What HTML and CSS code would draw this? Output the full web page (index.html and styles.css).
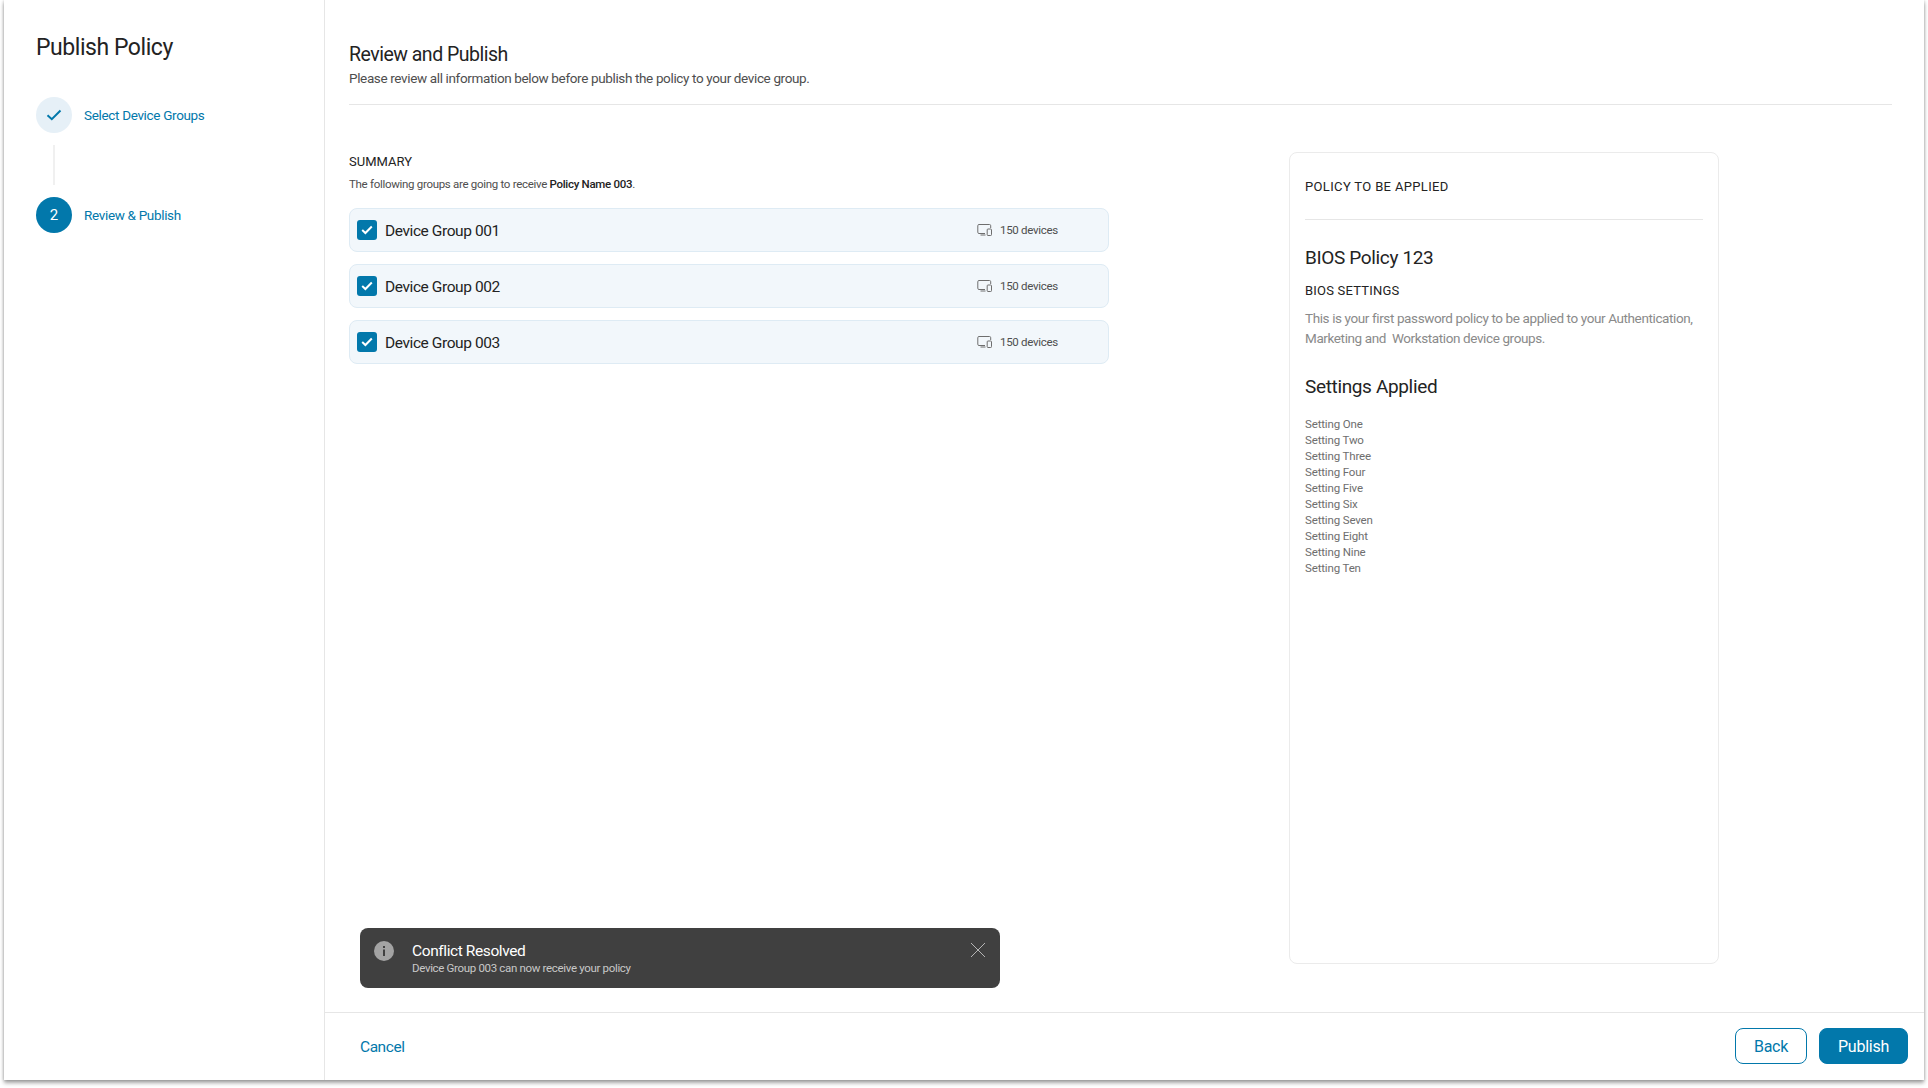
FILE: index.html
```html
<!DOCTYPE html>
<html lang="en">
<head>
<meta charset="utf-8">
<title>Publish Policy</title>
<link rel="stylesheet" href="styles.css">
</head>
<body>
<div class="frame">
  <aside class="sidebar">
    <h1 class="side-title">Publish Policy</h1>
    <ol class="steps">
      <li class="step">
        <span class="step-dot step-dot-done">
          <svg width="16" height="12" viewBox="0 0 16 12" fill="none"><path d="M1.5 6.2 5.8 10.2 14.5 1.5" stroke="#0278ab" stroke-width="2"/></svg>
        </span>
        <span class="step-label">Select Device Groups</span>
      </li>
      <li class="step-line"></li>
      <li class="step">
        <span class="step-dot step-dot-active">2</span>
        <span class="step-label">Review &amp; Publish</span>
      </li>
    </ol>
  </aside>
  <main class="main">
    <div class="content">
      <header class="head">
        <h2 class="head-title">Review and Publish</h2>
        <p class="head-sub">Please review all information below before publish the policy to your device group.</p>
      </header>
      <div class="columns">
        <section class="summary">
          <h3 class="caps">SUMMARY</h3>
          <p class="summary-sub">The following groups are going to receive <b class="strong">Policy Name 003</b>.</p>
          <ul class="groups">
            <li class="group">
              <span class="check"><svg width="12" height="10" viewBox="0 0 12 10" fill="none"><path d="M1.2 5 4.4 8 10.8 1.5" stroke="#fff" stroke-width="2"/></svg></span>
              <span class="group-name">Device Group 001</span>
              <span class="group-count">
                <svg class="device-icon" width="15" height="12" viewBox="0 0 15 12" fill="none"><path d="M8 9.5H2A1.2 1.2 0 0 1 .8 8.3V1.7A1.2 1.2 0 0 1 2 .5h10.5a1.2 1.2 0 0 1 1.2 1.2V4M3.5 11h5" stroke="#6e6e6e"/><rect x="10.2" y="5" width="4.3" height="6.5" rx=".8" stroke="#6e6e6e"/></svg>
                150 devices
              </span>
            </li>
            <li class="group">
              <span class="check"><svg width="12" height="10" viewBox="0 0 12 10" fill="none"><path d="M1.2 5 4.4 8 10.8 1.5" stroke="#fff" stroke-width="2"/></svg></span>
              <span class="group-name">Device Group 002</span>
              <span class="group-count">
                <svg class="device-icon" width="15" height="12" viewBox="0 0 15 12" fill="none"><path d="M8 9.5H2A1.2 1.2 0 0 1 .8 8.3V1.7A1.2 1.2 0 0 1 2 .5h10.5a1.2 1.2 0 0 1 1.2 1.2V4M3.5 11h5" stroke="#6e6e6e"/><rect x="10.2" y="5" width="4.3" height="6.5" rx=".8" stroke="#6e6e6e"/></svg>
                150 devices
              </span>
            </li>
            <li class="group">
              <span class="check"><svg width="12" height="10" viewBox="0 0 12 10" fill="none"><path d="M1.2 5 4.4 8 10.8 1.5" stroke="#fff" stroke-width="2"/></svg></span>
              <span class="group-name">Device Group 003</span>
              <span class="group-count">
                <svg class="device-icon" width="15" height="12" viewBox="0 0 15 12" fill="none"><path d="M8 9.5H2A1.2 1.2 0 0 1 .8 8.3V1.7A1.2 1.2 0 0 1 2 .5h10.5a1.2 1.2 0 0 1 1.2 1.2V4M3.5 11h5" stroke="#6e6e6e"/><rect x="10.2" y="5" width="4.3" height="6.5" rx=".8" stroke="#6e6e6e"/></svg>
                150 devices
              </span>
            </li>
          </ul>
        </section>
        <section class="panel">
          <h3 class="panel-label">POLICY TO BE APPLIED</h3>
          <h4 class="panel-title">BIOS Policy 123</h4>
          <h5 class="panel-caps">BIOS SETTINGS</h5>
          <p class="panel-desc">This is your first password policy to be applied to your Authentication, Marketing and&nbsp; Workstation device groups.</p>
          <h4 class="panel-title panel-title-settings">Settings Applied</h4>
          <ul class="settings">
            <li>Setting One</li>
            <li>Setting Two</li>
            <li>Setting Three</li>
            <li>Setting Four</li>
            <li>Setting Five</li>
            <li>Setting Six</li>
            <li>Setting Seven</li>
            <li>Setting Eight</li>
            <li>Setting Nine</li>
            <li>Setting Ten</li>
          </ul>
        </section>
      </div>
      <div class="toast">
        <svg class="toast-icon" width="20" height="20" viewBox="0 0 20 20"><circle cx="10" cy="10" r="10" fill="#a3a3a3"/><rect x="9" y="8.5" width="2" height="6.5" fill="#404040"/><rect x="9" y="5" width="2" height="2" fill="#404040"/></svg>
        <div class="toast-text">
          <div class="toast-title">Conflict Resolved</div>
          <div class="toast-sub">Device Group 003 can now receive your policy</div>
        </div>
        <svg class="toast-close" width="16" height="16" viewBox="0 0 16 16" fill="none"><path d="M1 1 15 15M15 1 1 15" stroke="#b5b5b5" stroke-width="1"/></svg>
      </div>
    </div>
    <footer class="footer">
      <a class="cancel">Cancel</a>
      <div class="actions">
        <button class="btn btn-outline">Back</button>
        <button class="btn btn-solid">Publish</button>
      </div>
    </footer>
  </main>
</div>
</body>
</html>
```

FILE: styles.css
```css
* { box-sizing: border-box; }
html, body { margin: 0; padding: 0; background: #fff; }
body {
  font-family: "Roboto", "Noto Sans", sans-serif;
  color: #212121;
  height: 1088px;
  overflow: hidden;
  padding: 0 4px;
}
h1, h2, h3, h4, h5, p, ul, ol { margin: 0; padding: 0; font-weight: 400; list-style: none; }

.frame {
  display: flex;
  width: 1920px;
  height: 1080px;
  background: #fff;
  box-shadow: 0 3px 4px rgba(0, 0, 0, .35), 0 0 3px rgba(0, 0, 0, .2);
}

.sidebar {
  width: 321px;
  flex: none;
  border-right: 1px solid #e6e6e6;
  padding: 33px 32px 0;
}
.side-title { font-size: 23px; line-height: 30px; color: #232323; letter-spacing: -.45px; }
.steps { margin-top: 34px; }
.step { display: flex; align-items: center; gap: 12px; }
.step-dot {
  width: 36px;
  height: 36px;
  border-radius: 50%;
  display: flex;
  align-items: center;
  justify-content: center;
  flex: none;
  font-size: 15px;
}
.step-dot-done { background: #e6f0f7; }
.step-dot-active { background: #0278ab; color: #fff; }
.step-label { font-size: 13.5px; color: #0278ab; letter-spacing: -.33px; }
.step-line { width: 2px; height: 40px; margin: 12px 0 12px 17px; background: #f0f0f0; }

.main { flex: 1; min-width: 0; display: flex; flex-direction: column; }
.content { flex: 1; position: relative; padding: 0 32px 0 24px; min-height: 0; }

.head { padding-top: 43px; height: 105px; border-bottom: 1px solid #e6e6e6; }
.head-title { font-size: 19.5px; line-height: 24px; color: #232323; letter-spacing: -.5px; }
.head-sub { font-size: 13.5px; line-height: 20px; margin-top: 1px; color: #4e4e4e; letter-spacing: -.36px; }

.columns { display: flex; margin-top: 47px; align-items: flex-start; }
.summary { width: 760px; }
.caps { font-size: 13px; line-height: 20px; color: #232323; }
.summary-sub { font-size: 11.5px; line-height: 16px; margin-top: 4px; color: #4e4e4e; letter-spacing: -.3px; }
.strong { font-weight: 500; color: #232323; }
.groups { margin-top: 16px; display: flex; flex-direction: column; gap: 12px; }
.group {
  height: 44px;
  display: flex;
  align-items: center;
  padding: 0 0 0 7px;
  background: #f2f7fb;
  border: 1px solid #deebf4;
  border-radius: 8px;
}
.check {
  width: 20px;
  height: 20px;
  border-radius: 3px;
  background: #0278ab;
  display: flex;
  align-items: center;
  justify-content: center;
  flex: none;
}
.group-name { margin-left: 8px; font-size: 15.5px; line-height: 20px; padding-top: 1px; color: #232323; letter-spacing: -.42px; }
.group-count {
  margin-left: auto;
  width: 131px;
  display: flex;
  align-items: center;
  gap: 8px;
  font-size: 11.5px;
  color: #4e4e4e;
  letter-spacing: -.3px;
}
.device-icon { flex: none; }

.panel {
  width: 430px;
  height: 812px;
  margin-left: 180px;
  flex: none;
  border: 1px solid #ebebeb;
  border-radius: 8px;
  padding: 0 15px;
}
.panel-label {
  font-size: 13px;
  line-height: 20px;
  padding: 24px 0 23px;
  border-bottom: 1px solid #e6e6e6;
  letter-spacing: .35px;
  height: 67px;
  color: #232323;
}
.panel-title { font-size: 19px; line-height: 24px; margin-top: 26px; color: #232323; letter-spacing: -.35px; }
.panel-caps { font-size: 13px; line-height: 18px; margin-top: 12px; letter-spacing: .2px; color: #232323; }
.panel-desc { font-size: 13.5px; line-height: 20px; margin-top: 8px; color: #8a8a8a; letter-spacing: -.39px; }
.panel-title-settings { margin-top: 27px; }
.settings { margin-top: 17px; font-size: 11.5px; line-height: 16px; color: #6e6e6e; letter-spacing: -.15px; }

.toast {
  position: absolute;
  left: 35px;
  bottom: 24px;
  width: 640px;
  height: 60px;
  background: #404040;
  border-radius: 8px;
  display: flex;
  align-items: flex-start;
  padding: 13px 14px 0 14px;
  color: #fff;
}
.toast-icon { flex: none; }
.toast-text { margin-left: 18px; flex: 1; }
.toast-title { font-size: 15.5px; line-height: 20px; letter-spacing: -.4px; }
.toast-sub { font-size: 11.5px; line-height: 15px; color: #c8c8c8; letter-spacing: -.33px; }
.toast-close { flex: none; margin-top: 1px; margin-right: 0; }

.footer {
  flex: none;
  height: 68px;
  border-top: 1px solid #e6e6e6;
  display: flex;
  align-items: center;
  justify-content: space-between;
  padding: 0 16px 1px 35px;
}
.cancel { font-size: 15.5px; line-height: 20px; padding-top: 2px; color: #0278ab; letter-spacing: -.45px; }
.actions { display: flex; gap: 12px; }
.btn {
  height: 36px;
  border-radius: 8px;
  font: inherit;
  font-size: 16px;
  padding: 0;
  letter-spacing: -.25px;
}
.btn-outline { width: 72px; background: #fff; border: 1px solid #0278ab; color: #0278ab; }
.btn-solid { width: 89px; background: #0278ab; border: 1px solid #0278ab; color: #fff; }
```
